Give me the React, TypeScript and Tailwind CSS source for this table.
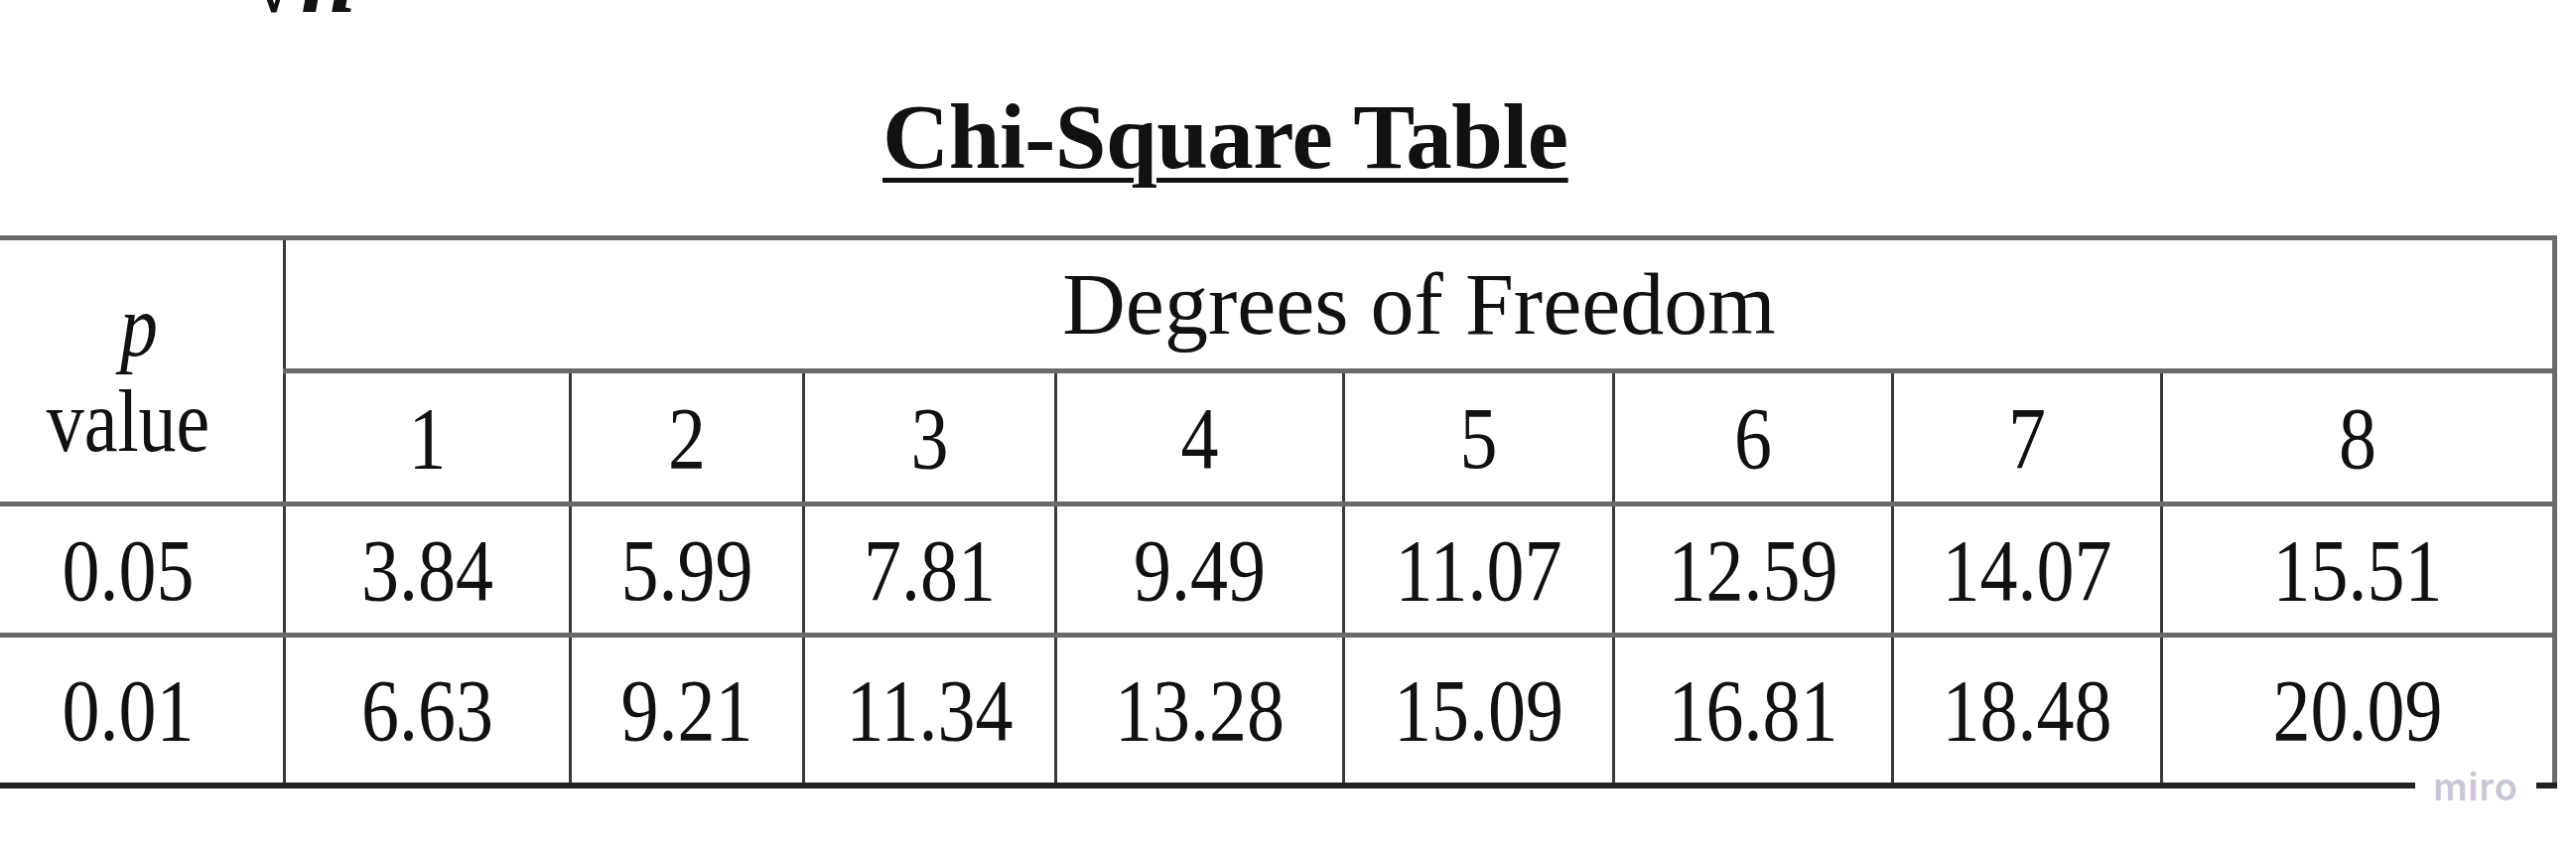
import React from "react";

const widths = [315, 288, 235, 254, 290, 272, 281, 271, 396];
const row05 = ["3.84", "5.99", "7.81", "9.49", "11.07", "12.59", "14.07", "15.51"];
const row01 = ["6.63", "9.21", "11.34", "13.28", "15.09", "16.81", "18.48", "20.09"];

function T({ children, italic = false }: { children: React.ReactNode; italic?: boolean }) {
  return (
    <span className={`inline-block scale-y-[1.16] ${italic ? "italic" : ""}`}>{children}</span>
  );
}

export default function App() {
  const cellBase =
    "border-x-[3px] border-y-[5px] border-x-[#3a3a3a] border-y-[#6a6a6a] text-center align-middle p-0";
  return (
    <div className="relative w-[2595px] h-[866px] overflow-hidden bg-white text-[#111] font-['Liberation_Serif','Times_New_Roman',serif]">
      <div className="h-[18px] overflow-hidden pl-[248px]">
        <div className="mt-[-71px] text-[100px] leading-none font-bold whitespace-nowrap">
          √<span className="italic">n</span>
        </div>
      </div>

      <div className="pl-[889px] pt-[70px] h-[219px]">
        <span className="inline-block text-[93px] leading-[100px] font-bold underline decoration-[5px] underline-offset-[10px] tracking-[-0.5px]">
          Chi-Square Table
        </span>
      </div>

      <div className="ml-[-30px]">
        <table className="table-fixed border-collapse w-[2602px] text-[76px] leading-none">
          <colgroup>
            {widths.map((w, i) => (
              <col key={i} style={{ width: w }} />
            ))}
          </colgroup>
          <tbody>
            <tr className="h-[134px]">
              <td rowSpan={2} className={`${cellBase} leading-[96px]`}>
                <div className="pt-[4px] pl-[22px]">
                  <T italic>p</T>
                </div>
                <div>
                  <T>value</T>
                </div>
              </td>
              <td colSpan={8} className={`${cellBase} border-r-[5px] border-r-[#6a6a6a]`}>
                <span className="inline-block text-[88px] leading-none">Degrees of Freedom</span>
              </td>
            </tr>
            <tr className="h-[134px]">
              {[1, 2, 3, 4, 5, 6, 7, 8].map((n) => (
                <td key={n} className={`${cellBase} ${n === 8 ? "border-r-[5px] border-r-[#6a6a6a]" : ""}`}>
                  <T>{n}</T>
                </td>
              ))}
            </tr>
            <tr className="h-[132px]">
              <td className={cellBase}>
                <T>0.05</T>
              </td>
              {row05.map((v, i) => (
                <td key={i} className={`${cellBase} ${i === 7 ? "border-r-[5px] border-r-[#6a6a6a]" : ""}`}>
                  <T>{v}</T>
                </td>
              ))}
            </tr>
            <tr className="h-[151px]">
              <td className={`${cellBase} border-b-[6px] border-b-[#222]`}>
                <T>0.01</T>
              </td>
              {row01.map((v, i) => (
                <td
                  key={i}
                  className={`${cellBase} border-b-[6px] border-b-[#222] ${i === 7 ? "border-r-[5px] border-r-[#6a6a6a]" : ""}`}
                >
                  <T>{v}</T>
                </td>
              ))}
            </tr>
          </tbody>
        </table>
      </div>

      <div className="absolute left-[2433px] top-[774px] w-[122px] h-[36px] bg-white flex items-center justify-center">
        <span className="font-['Inter',sans-serif] font-semibold text-[38px] leading-none tracking-[1px] text-[#c9c7d7]">
          miro
        </span>
      </div>
    </div>
  );
}
